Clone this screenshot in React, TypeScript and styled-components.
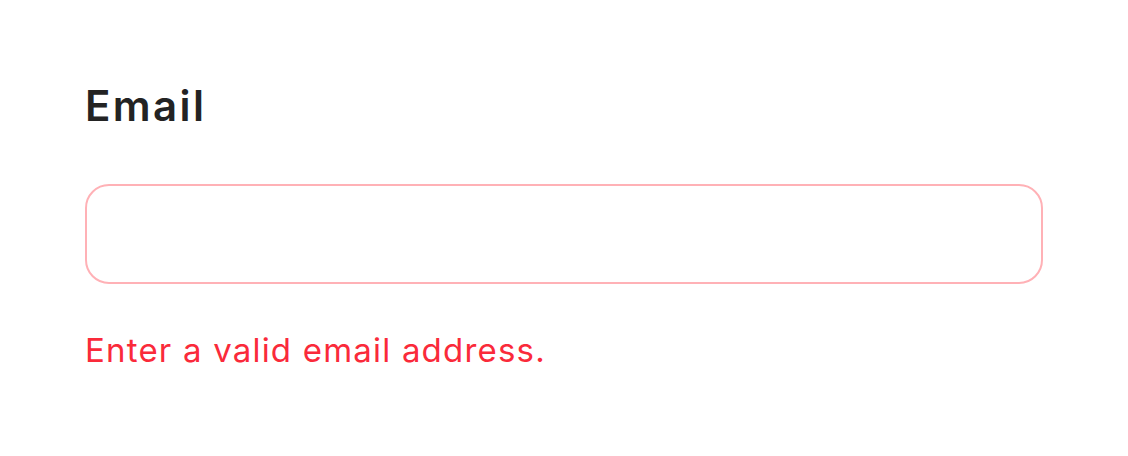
import React from "react";
import styled, { createGlobalStyle } from "styled-components";

const Global = createGlobalStyle`
  html, body { margin: 0; padding: 0; background: #fff; }
  body { font-family: Inter, "Noto Sans", sans-serif; }
`;

const Page = styled.div`
  padding: 76px 85px 0 85px;
  width: 958px;
  display: flex;
  flex-direction: column;
  align-items: flex-start;
`;

const Label = styled.label`
  font-size: 42px;
  font-weight: 600;
  color: #232323;
  line-height: 60px;
  letter-spacing: 2.4px;
`;

const Input = styled.input`
  margin-top: 48px;
  box-sizing: border-box;
  width: 958px;
  height: 100px;
  border: 2px solid #ffb1b6;
  border-radius: 24px;
  outline: none;
  background: #fff;
  font-family: inherit;
  font-size: 32px;
  padding: 0 24px;
`;

const ErrorText = styled.div`
  margin-top: 44px;
  font-size: 33px;
  color: #fa2a3a;
  line-height: 44px;
  letter-spacing: 1.2px;
`;

export default function App() {
  return (
    <>
      <Global />
      <Page>
        <Label htmlFor="email">Email</Label>
        <Input id="email" type="email" />
        <ErrorText>Enter a valid email address.</ErrorText>
      </Page>
    </>
  );
}
